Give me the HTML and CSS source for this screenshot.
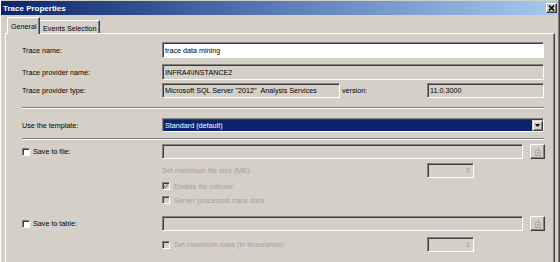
FILE: index.html
```html
<!DOCTYPE html>
<html lang="en">
	<head>
		<meta charset="utf-8">
		<title>Trace Properties</title>
		<link rel="stylesheet" href="styles.css">
	</head>
	<body>
		<div class="window">
			<div class="titlebar">
				<span class="title">Trace Properties</span>
				<span class="close">
					<svg width="7" height="6" viewBox="0 0 7 6"><path d="M1 0.5 L6 5.5 M6 0.5 L1 5.5" stroke="#000" stroke-width="1.6"/></svg>
				</span>
			</div>
			<div class="content">
				<div class="tabs">
					<span class="tab active">General</span>
					<span class="tab events">Events Selection</span>
				</div>
				<div class="panel">
					<div class="row r1">
						<span class="label">Trace name:</span>
						<div class="field"><div class="edit white">trace data mining</div></div>
					</div>
					<div class="row r2">
						<span class="label">Trace provider name:</span>
						<div class="field"><div class="edit">INFRA4\INSTANCE2</div></div>
					</div>
					<div class="row r3">
						<span class="label">Trace provider type:</span>
						<div class="field">
							<div class="edit type">Microsoft SQL Server "2012" &nbsp;Analysis Services</div>
							<span class="version">version:</span>
							<div class="edit grow">11.0.3000</div>
						</div>
					</div>
					<div class="sep s1"></div>
					<div class="row r4">
						<span class="label">Use the template:</span>
						<div class="field">
							<div class="combo">
								<span class="combo-text">Standard (default)</span>
								<span class="drop"><svg width="5" height="3" viewBox="0 0 5 3"><path d="M0 0 H5 L2.5 3 Z" fill="#000"/></svg></span>
							</div>
						</div>
					</div>
					<div class="sep s2"></div>
					<div class="row r5">
						<span class="label"><span class="check"></span>Save to file:</span>
						<div class="field">
							<div class="edit grow"></div>
							<span class="browse">
								<svg width="8" height="8" viewBox="0 0 8 8"><path d="M1.5 2.5 H6.5 V7.5 H1.5 Z M3 1 H5 M3 4.5 H5 M3 6 H5" stroke="#a8a59e" fill="none" stroke-width="1"/></svg>
							</span>
						</div>
					</div>
					<div class="row r6">
						<span class="label"></span>
						<div class="field">
							<span class="sub off">Set maximum file size (MB):</span>
							<div class="edit num off">5</div>
						</div>
					</div>
					<div class="row r7">
						<span class="label"></span>
						<div class="field">
							<span class="check dis"><svg width="6" height="6" viewBox="0 0 6 6"><path d="M0.8 2.8 L2.4 4.4 L5.2 1.2" stroke="#8a8780" stroke-width="1.3" fill="none"/></svg></span>
							<span class="off">Enable file rollover</span>
						</div>
					</div>
					<div class="row r8">
						<span class="label"></span>
						<div class="field">
							<span class="check dis"></span>
							<span class="off">Server processes trace data</span>
						</div>
					</div>
					<div class="row r9">
						<span class="label"><span class="check"></span>Save to table:</span>
						<div class="field">
							<div class="edit grow"></div>
							<span class="browse">
								<svg width="8" height="8" viewBox="0 0 8 8"><path d="M1.5 2.5 H6.5 V7.5 H1.5 Z M3 1 H5 M3 4.5 H5 M3 6 H5" stroke="#a8a59e" fill="none" stroke-width="1"/></svg>
							</span>
						</div>
					</div>
					<div class="row r10">
						<span class="label"></span>
						<div class="field">
							<span class="check dis"></span>
							<span class="sub short off">Set maximum rows (in thousands):</span>
							<div class="edit num off">1</div>
						</div>
					</div>
				</div>
			</div>
		</div>
	</body>
</html>
```

FILE: styles.css
```css
body, html {
	margin:0;
	padding:0;
}
body {
	width:560px;
	height:262px;
	overflow:hidden;
	background:#d4d0c8;
	font-family:"Liberation Sans", Arial, sans-serif;
	font-size:7.2px;
	color:#000;
}
.window {
	box-sizing:border-box;
	height:262px;
	overflow:hidden;
	border-left:1px solid #fff;
	border-right:1px solid #404040;
	box-shadow:inset -1px 0 #808080;
}
.titlebar {
	height:14px;
	margin:1px 1px 0 0;
	padding:0 1px 0 2px;
	display:flex;
	align-items:center;
	justify-content:space-between;
	background:linear-gradient(to right, #0a246a, #5a7cb8 50%, #a6caf0);
}
.title {
	color:#fff;
	font-weight:bold;
	font-size:8px;
}
.close {
	width:11px;
	height:10px;
	box-sizing:border-box;
	display:flex;
	align-items:center;
	justify-content:center;
	background:#d4d0c8;
	border:1px solid;
	border-color:#fff #404040 #404040 #fff;
	box-shadow:inset -1px -1px #808080;
}
.content {
	padding:2px 4px 0 4px;
}
.tabs {
	height:16px;
	padding-left:2px;
	display:flex;
	align-items:flex-end;
}
.tab {
	box-sizing:border-box;
	height:13px;
	padding:2px 0 0 3px;
	display:flex;
	align-items:center;
	border-top:1px solid #fff;
	border-left:1px solid #fff;
	border-right:1px solid #404040;
	box-shadow:inset -1px 0 #808080;
	background:#d4d0c8;
}
.active {
	width:33px;
	height:17px;
	padding-top:0;
	margin-bottom:-1px;
	position:relative;
	z-index:1;
}
.events {
	width:60px;
	border-left:none;
}
.panel {
	box-sizing:border-box;
	height:229px;
	padding:8px 10px 0 16px;
	border-top:1px solid #fff;
	border-left:1px solid #fff;
	border-right:1px solid #404040;
	box-shadow:inset -1px 0 #808080;
}
.row {
	display:flex;
	align-items:center;
}
.label {
	width:140px;
	flex:none;
	display:flex;
	align-items:center;
}
.field {
	flex:1;
	height:100%;
	display:flex;
	align-items:center;
}
.r1 { height:16px; }
.r2 { height:16px; margin-top:6px; }
.r3 { height:15px; margin-top:3px; }
.r4 { height:14px; margin-top:9px; }
.r5 { height:15px; margin-top:4px; }
.r6 { height:15px; margin-top:4px; }
.r7 { height:12px; margin-top:2px; }
.r8 { height:12px; margin-top:2px; }
.r9 { height:15px; margin-top:10px; }
.r10 { height:15px; margin-top:6px; }
.edit {
	box-sizing:border-box;
	width:100%;
	height:100%;
	padding-left:2px;
	display:flex;
	align-items:center;
	white-space:nowrap;
	overflow:hidden;
	border:1px solid;
	border-color:#808080 #fff #fff #808080;
	box-shadow:inset 1px 1px #404040;
	background:#d4d0c8;
}
.white {
	background:#fff;
}
.type {
	width:178px;
	flex:none;
}
.version {
	width:85px;
	flex:none;
	padding-left:2px;
}
.grow {
	flex:1;
	width:auto;
}
.sep {
	border-top:1px solid #808080;
	border-bottom:1px solid #fff;
}
.s1 { margin-top:9px; }
.s2 { margin-top:6px; }
.combo {
	box-sizing:border-box;
	width:100%;
	height:100%;
	display:flex;
	border:1px solid;
	border-color:#808080 #fff #fff #808080;
	box-shadow:inset 1px 1px #404040;
	padding:1px 0 0 1px;
	background:#fff;
}
.combo-text {
	flex:1;
	padding-left:1px;
	display:flex;
	align-items:center;
	background:#0a246a;
	color:#fff;
}
.drop {
	box-sizing:border-box;
	width:11px;
	display:flex;
	align-items:center;
	justify-content:center;
	background:#d4d0c8;
	border:1px solid;
	border-color:#d4d0c8 #404040 #404040 #d4d0c8;
	box-shadow:inset 1px 1px #fff, inset -1px -1px #808080;
}
.browse {
	box-sizing:border-box;
	width:15px;
	height:15px;
	margin-left:7px;
	margin-right:-1px;
	flex:none;
	display:flex;
	align-items:center;
	justify-content:center;
	border:1px solid;
	border-color:#fff #404040 #404040 #fff;
	box-shadow:inset -1px -1px #808080;
}
.check {
	box-sizing:border-box;
	width:8px;
	height:8px;
	margin-right:3px;
	flex:none;
	display:flex;
	align-items:center;
	justify-content:center;
	background:#fff;
	border:1px solid;
	border-color:#808080 #fff #fff #808080;
	box-shadow:inset 1px 1px #404040;
}
.field .check {
	margin-right:4px;
}
.dis {
	background:#d4d0c8;
}
.off {
	color:#a4a19a;
}
.sub {
	width:265px;
	flex:none;
}
.short {
	width:253px;
}
.num {
	width:47px;
	flex:none;
	justify-content:flex-end;
	padding-right:3px;
}
```
